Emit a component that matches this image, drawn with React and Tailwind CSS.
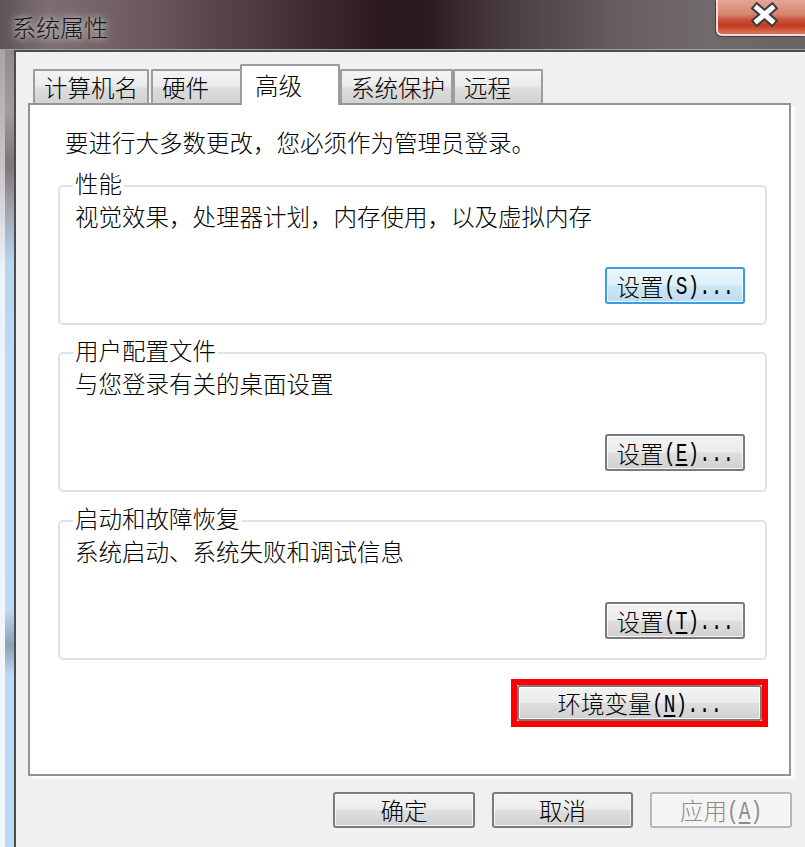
import React from "react";

function Acc({ text, u }) {
  return (
    <span className="inline-block w-[70px] whitespace-nowrap">
      <span className="inline-block origin-left scale-x-75 font-['Liberation_Mono',monospace] text-[26px] font-normal leading-[24px]">
        (<span className={u ? "underline underline-offset-[3px] decoration-[1.5px]" : ""}>{text}</span>)...
      </span>
    </span>
  );
}

function AccShort({ text }) {
  return (
    <span className="inline-block w-[35px] whitespace-nowrap">
      <span className="inline-block origin-left scale-x-75 font-['Liberation_Mono',monospace] text-[26px] font-normal leading-[24px]">
        (<span className="underline underline-offset-[3px] decoration-[1.5px]">{text}</span>)
      </span>
    </span>
  );
}

const btnStyles = {
  normal:
    "border-[#7b7b7b] bg-[linear-gradient(#f3f3f3_0%,#ececec_48%,#dedede_52%,#d0d0d0_100%)] text-black",
  focus:
    "border-[#3a9be0] bg-[linear-gradient(#ecf6fc_0%,#deeef8_48%,#cde6f5_52%,#bddcf0_100%)] text-black",
  disabled: "border-[#b3b7ba] bg-[#f4f4f4] text-[#8c8c8c]",
};

function Btn({ children, className = "", variant = "normal" }) {
  return (
    <div
      className={`flex items-center justify-center whitespace-nowrap rounded-[3px] border-2 shadow-[inset_0_0_0_1px_rgba(255,255,255,0.75)] ${btnStyles[variant]} ${className}`}
    >
      {children}
    </div>
  );
}

function Group({ title, desc, btn }) {
  return (
    <div className="relative flex h-[140px] flex-col rounded-[5px] border-2 border-[#dbe3e9]">
      <div className="absolute -top-[16px] left-[13px] bg-white px-[2px] leading-[24px]">{title}</div>
      <div className="pl-[15px] pt-[17px] leading-[24px]">{desc}</div>
      <div className="mt-auto mb-[19px] mr-[20px] self-end">{btn}</div>
    </div>
  );
}

function Tab({ label, w, className = "" }) {
  return (
    <div
      className={`mb-[2px] flex h-[34px] items-center rounded-t-[2px] border-2 border-b-0 border-[#9a9ca2] bg-[linear-gradient(#f4f4f4_0%,#ececec_45%,#dcdcdc_55%,#d2d2d2_100%)] pl-[9px] ${w} ${className}`}
    >
      {label}
    </div>
  );
}

export default function App() {
  return (
    <div className="relative h-[847px] w-[805px] overflow-hidden bg-[#f0f0f0] font-['Noto_Sans_CJK_SC','Noto_Sans_CJK_JP',sans-serif] text-[23.5px] font-light leading-[24px] text-black">
      {/* Title bar */}
      <div className="flex h-[50px] items-start justify-between border-b border-[#a69ea1] bg-[linear-gradient(90deg,#5f5357_0%,#7c6e72_6%,#6c595d_18%,#4d393e_32%,#2c1a1f_47%,#2a1b20_53%,#4a3d42_63%,#655c60_76%,#716a6d_88%,#6a6366_100%)]">
        <div className="pl-[12px] pt-[15px] text-[24px] text-[#151515] [text-shadow:0_0_12px_rgba(235,235,235,0.9),0_0_5px_rgba(235,235,235,0.75)]">
          系统属性
        </div>
        <div className="h-[36px] w-[89px] rounded-bl-[6px] border-b-2 border-l-2 border-[#efdcd8] bg-[linear-gradient(#e3a596_0%,#d8846f_42%,#c9543a_58%,#c63a1e_75%,#db765c_100%)] shadow-[-1px_1px_0_#4a3a3d]">
          <svg width="89" height="34" viewBox="0 0 89 34">
            <g strokeLinecap="square">
              <path d="M39 8 L54 21 M39 21 L54 8" stroke="#3b3b3b" strokeWidth="9" />
              <path d="M39 8 L54 21 M39 21 L54 8" stroke="#ffffff" strokeWidth="5" />
            </g>
          </svg>
        </div>
      </div>

      <div className="flex h-[797px]">
        {/* left window frame */}
        <div className="flex w-[14px]">
          <div className="w-[5px] bg-[linear-gradient(#aaa2a5_0px,#c9c6c9_120px,#eef3f8_220px,#f4f7fa_100%)]" />
          <div className="w-[9px] bg-[linear-gradient(#938a8d_0px,#a39a9d_60px,#7e7579_115px,#9d9aa0_150px,#b6d3ef_210px,#bcdaf8_300px,#bcdaf8_560px,#8e9fb4_595px,#bcdaf8_625px,#bcdaf8_100%)]" />
        </div>

        {/* client area */}
        <div className="flex flex-1 flex-col border-l-2 border-t-[2px] border-[#4d4d4d] pl-[12px] pt-[12px]">
          {/* tabs */}
          <div className="relative z-10 -mb-[2px] flex h-[41px] items-end pl-[5px]">
            <Tab label="计算机名" w="w-[116px]" />
            <Tab label="硬件" w="w-[91px]" className="ml-[2px]" />
            <div className="-ml-[2px] flex h-[41px] w-[100px] items-start rounded-t-[2px] border-2 border-b-0 border-[#9a9ca2] bg-white pl-[13px] pt-[7px]">
              高级
            </div>
            <Tab label="系统保护" w="w-[113px]" />
            <Tab label="远程" w="w-[90px]" />
          </div>

          {/* panel */}
          <div className="flex h-[673px] w-[763px] flex-col border-2 border-[#949494] bg-white pl-[28px] pr-[22px] pt-[25px] shadow-[4px_3px_0_#fbfbfb]">
            <div className="ml-[7px] leading-[24px]">要进行大多数更改，您必须作为管理员登录。</div>

            <div className="mt-[31px]">
              <Group
                title="性能"
                desc="视觉效果，处理器计划，内存使用，以及虚拟内存"
                btn={
                  <Btn variant="focus" className="h-[37px] w-[140px]">
                    设置<Acc text="S" />
                  </Btn>
                }
              />
            </div>
            <div className="mt-[27px]">
              <Group
                title="用户配置文件"
                desc="与您登录有关的桌面设置"
                btn={
                  <Btn className="h-[37px] w-[140px]">
                    设置<Acc text="E" u />
                  </Btn>
                }
              />
            </div>
            <div className="mt-[28px]">
              <Group
                title="启动和故障恢复"
                desc="系统启动、系统失败和调试信息"
                btn={
                  <Btn className="h-[37px] w-[140px]">
                    设置<Acc text="T" u />
                  </Btn>
                }
              />
            </div>

            <div className="-mr-[1px] mt-[19px] self-end border-[6px] border-[#ff0000]">
              <Btn className="h-[36px] w-[245px]">
                环境变量<Acc text="N" u />
              </Btn>
            </div>
          </div>

          {/* bottom buttons */}
          <div className="mt-[16px] flex justify-end gap-[17px] pr-[13px]">
            <Btn className="h-[36px] w-[142px]">确定</Btn>
            <Btn className="h-[36px] w-[141px]">取消</Btn>
            <Btn variant="disabled" className="h-[36px] w-[142px]">
              应用<AccShort text="A" />
            </Btn>
          </div>
        </div>
      </div>
    </div>
  );
}
